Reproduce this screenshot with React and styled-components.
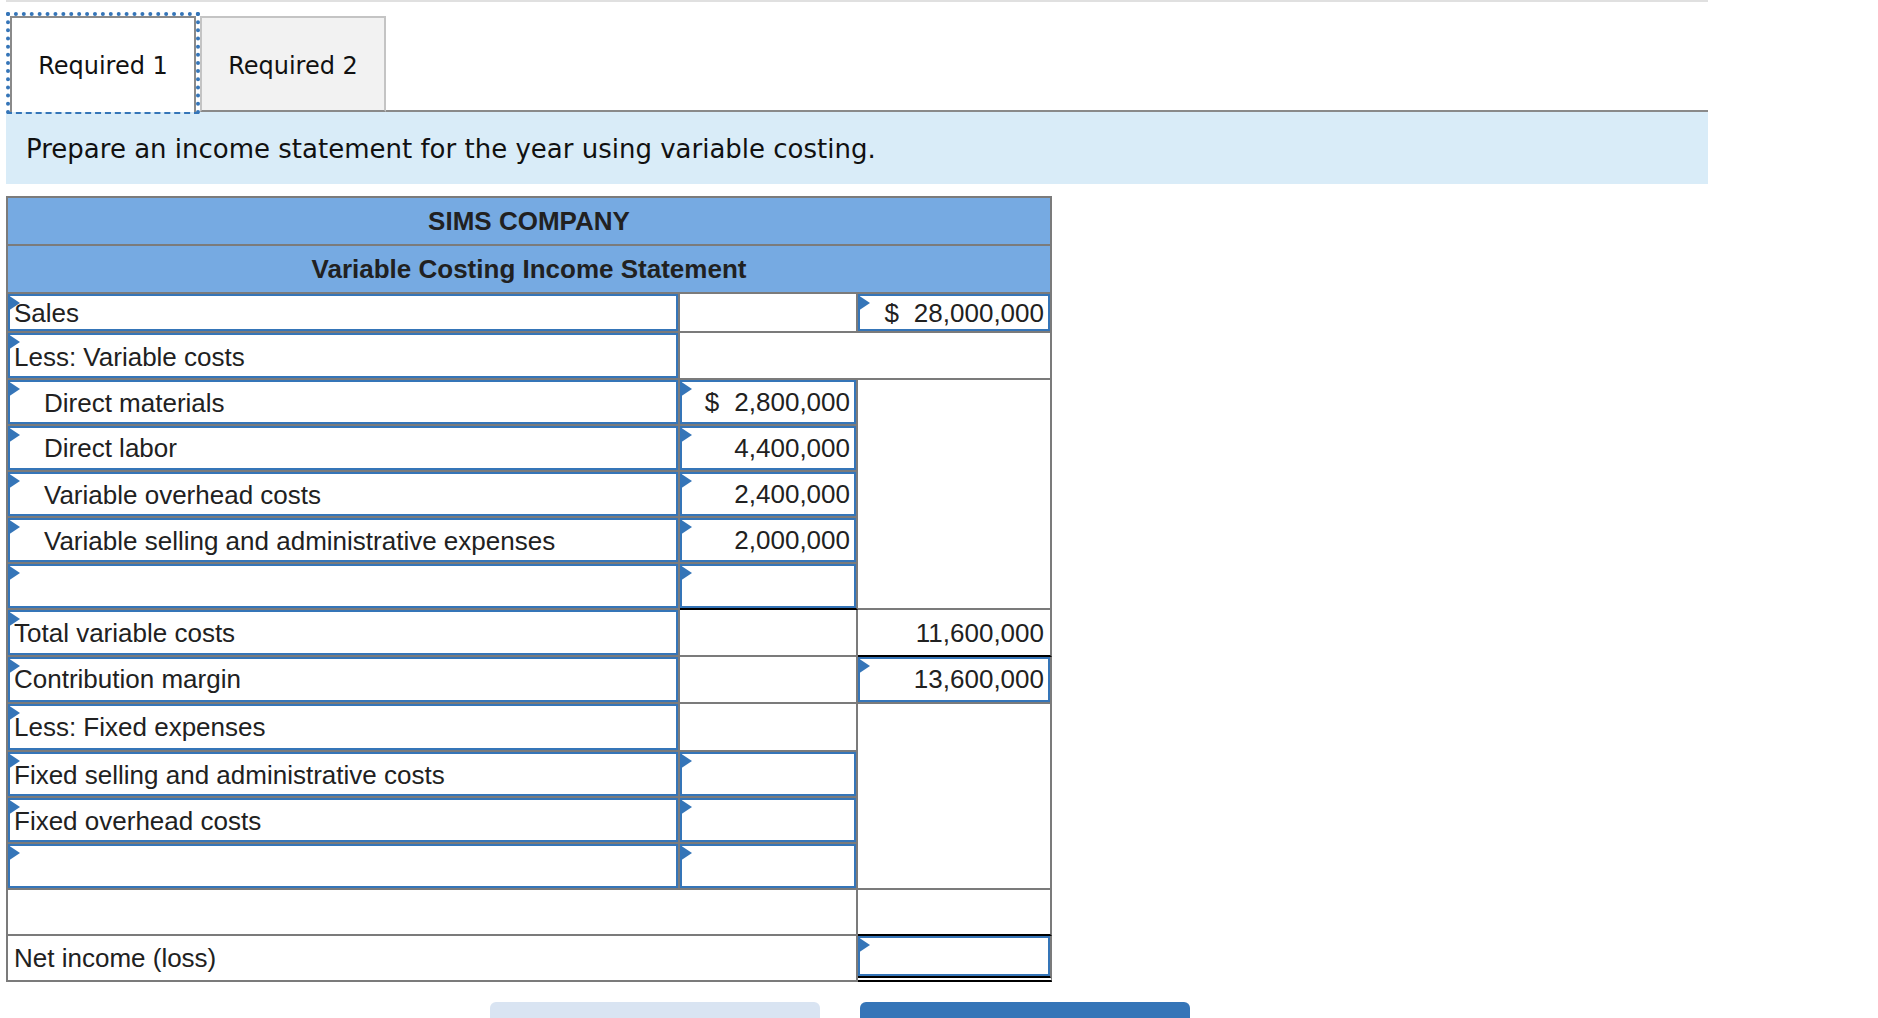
import React from "react";
import styled, { createGlobalStyle } from "styled-components";

const Global = createGlobalStyle`
  html, body { margin: 0; padding: 0; height: 100%; overflow: hidden; background: #fff; }
  * { box-sizing: border-box; }
`;

const Page = styled.div`
  width: 1702px;
  margin-left: 6px;
  height: 1018px;
  overflow: hidden;
  color: #212121;
`;
const TopRule = styled.div`
  height: 2px;
  background: #e0e0e0;
`;
const TabBar = styled.div`
  display: flex;
  align-items: flex-end;
  height: 110px;
  padding-top: 10px;
  position: relative;
`;
const FocusRing = styled.div`
  width: 194px;
  height: 102px;
  margin-bottom: -2px;
  position: relative;
  z-index: 1;
  border-style: dotted dotted dashed dotted;
  border-color: #3575b8;
  border-width: 4px 4px 2px 4px;
`;
const ActiveTab = styled.div`
  height: 100%;
  background: #fff;
  border-style: solid solid none solid;
  border-color: #8a8a8a;
  border-width: 2px;
  display: flex;
  align-items: center;
  justify-content: center;
  font: 24px "DejaVu Sans", Verdana, sans-serif;
  color: #111;
  padding-top: 2px;
`;
const IdleTab = styled.div`
  width: 186px;
  height: 96px;
  background: #f2f2f2;
  border: 2px solid #c4c4c4;
  border-bottom: 2px solid #8a8a8a;
  display: flex;
  align-items: center;
  justify-content: center;
  font: 24px "DejaVu Sans", Verdana, sans-serif;
  color: #111;
  padding-top: 4px;
`;
const TabRule = styled.div`
  flex: 1;
  height: 2px;
  background: #8a8a8a;
`;
const Band = styled.div`
  height: 72px;
  background: #d9ecf8;
  display: flex;
  align-items: center;
  padding-left: 20px;
  padding-top: 1px;
  font: 26px "DejaVu Sans", Verdana, sans-serif;
  color: #111;
`;
const Sheet = styled.table`
  margin-top: 12px;
  width: 1046px;
  table-layout: fixed;
  border-collapse: separate;
  border-spacing: 0;
  border-top: 2px solid #7b7b7b;
  border-left: 2px solid #7b7b7b;
  font: 26px "Liberation Sans", Arial, sans-serif;
`;
const Row = styled.tr`
  height: ${(p) => p.$h}px;
`;
const Title = styled.th`
  padding: 0;
  background: #76aae2;
  border-right: 2px solid #7b7b7b;
  border-bottom: 2px solid #7b7b7b;
  font-weight: bold;
  font-size: 26px;
  color: #212121;
  text-align: center;
`;
const Cell = styled.td`
  padding: 0;
  border-right: 2px solid #7b7b7b;
  border-bottom: ${(p) =>
    p.$double ? "6px double #000" : `2px solid ${p.$black ? "#000" : "#7b7b7b"}`};
  vertical-align: top;
`;
const Field = styled.div`
  position: relative;
  height: ${(p) => p.$h}px;
  border: 2px solid #3575b8;
  background: #fff;
  display: flex;
  align-items: center;
  justify-content: ${(p) => (p.$num ? "flex-end" : "flex-start")};
  padding-top: ${(p) => (p.$down ? 4 : p.$up ? 0 : 2)}px;
  padding-right: ${(p) => (p.$num ? 4 : 0)}px;
  padding-left: ${(p) => (p.$num ? 0 : p.$indent ? 34 : 4)}px;
  white-space: nowrap;
  &::before {
    content: "";
    position: absolute;
    left: -2px;
    top: -1px;
    border-left: 12px solid #3575b8;
    border-top: 8px solid transparent;
    border-bottom: 8px solid transparent;
  }
`;
const Plain = styled.div`
  height: ${(p) => p.$h}px;
  display: flex;
  align-items: center;
  justify-content: ${(p) => (p.$num ? "flex-end" : "flex-start")};
  padding: ${(p) => (p.$num ? "2px 6px 0 0" : "0 0 0 6px")};
`;
const Dollar = styled.span`
  margin-right: 15px;
`;
const Actions = styled.div`
  display: flex;
  gap: 40px;
  margin-top: 20px;
  padding-left: 484px;
`;
const Action = styled.div`
  width: 330px;
  height: 50px;
  border-radius: 6px 6px 0 0;
  background: ${(p) => (p.$primary ? "#3575b8" : "#d9e4f2")};
`;

export default function App() {
  return (
    <Page>
      <Global />
      <TopRule />
      <TabBar>
        <FocusRing>
          <ActiveTab>Required 1</ActiveTab>
        </FocusRing>
        <IdleTab>Required 2</IdleTab>
        <TabRule />
      </TabBar>
      <Band>Prepare an income statement for the year using variable costing.</Band>
      <Sheet>
        <colgroup>
          <col style={{ width: 672 }} />
          <col style={{ width: 178 }} />
          <col style={{ width: 194 }} />
        </colgroup>
        <tbody>
          <Row $h={48}><Title colSpan={3}>SIMS COMPANY</Title></Row>
          <Row $h={48}><Title colSpan={3}>Variable Costing Income Statement</Title></Row>

          <Row $h={39}>
            <Cell><Field $h={37}>Sales</Field></Cell>
            <Cell />
            <Cell><Field $h={37} $num><Dollar>$</Dollar>28,000,000</Field></Cell>
          </Row>
          <Row $h={47}>
            <Cell><Field $h={45} $down>Less: Variable costs</Field></Cell>
            <Cell colSpan={2} />
          </Row>
          <Row $h={46}>
            <Cell><Field $h={44} $indent>Direct materials</Field></Cell>
            <Cell><Field $h={44} $num $up><Dollar>$</Dollar>2,800,000</Field></Cell>
            <Cell rowSpan={5} />
          </Row>
          <Row $h={46}>
            <Cell><Field $h={44} $indent $up>Direct labor</Field></Cell>
            <Cell><Field $h={44} $num $up>4,400,000</Field></Cell>
          </Row>
          <Row $h={46}>
            <Cell><Field $h={44} $indent>Variable overhead costs</Field></Cell>
            <Cell><Field $h={44} $num $up>2,400,000</Field></Cell>
          </Row>
          <Row $h={46}>
            <Cell><Field $h={44} $indent>Variable selling and administrative expenses</Field></Cell>
            <Cell><Field $h={44} $num $up>2,000,000</Field></Cell>
          </Row>
          <Row $h={46}>
            <Cell><Field $h={44} /></Cell>
            <Cell $black><Field $h={44} $num /></Cell>
          </Row>
          <Row $h={47}>
            <Cell><Field $h={45}>Total variable costs</Field></Cell>
            <Cell />
            <Cell $black><Plain $h={45} $num>11,600,000</Plain></Cell>
          </Row>
          <Row $h={47}>
            <Cell><Field $h={45} $up>Contribution margin</Field></Cell>
            <Cell />
            <Cell><Field $h={45} $num $up>13,600,000</Field></Cell>
          </Row>
          <Row $h={48}>
            <Cell><Field $h={46} $up>Less: Fixed expenses</Field></Cell>
            <Cell />
            <Cell rowSpan={4} />
          </Row>
          <Row $h={46}>
            <Cell><Field $h={44}>Fixed selling and administrative costs</Field></Cell>
            <Cell><Field $h={44} $num /></Cell>
          </Row>
          <Row $h={46}>
            <Cell><Field $h={44}>Fixed overhead costs</Field></Cell>
            <Cell><Field $h={44} $num /></Cell>
          </Row>
          <Row $h={46}>
            <Cell><Field $h={44} /></Cell>
            <Cell><Field $h={44} $num /></Cell>
          </Row>
          <Row $h={46}>
            <Cell colSpan={2} />
            <Cell $black />
          </Row>
          <Row $h={46}>
            <Cell colSpan={2}><Plain $h={44}>Net income (loss)</Plain></Cell>
            <Cell $double><Field $h={40} $num /></Cell>
          </Row>
        </tbody>
      </Sheet>
      <Actions>
        <Action />
        <Action $primary />
      </Actions>
    </Page>
  );
}
